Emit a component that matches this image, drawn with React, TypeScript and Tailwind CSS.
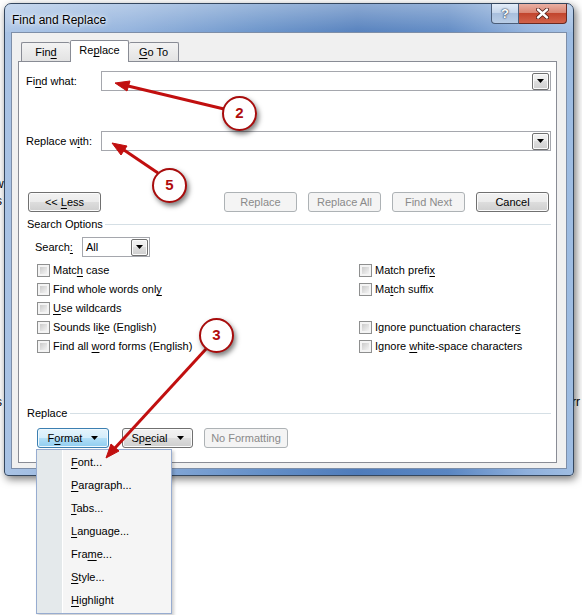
import React from 'react';

type Variant = 'normal' | 'disabled' | 'hot';

const Acc = ({ children }: { children: React.ReactNode }) => (
  <span className="underline underline-offset-[2px]">{children}</span>
);

const Tri = () => (
  <svg width="7" height="4" viewBox="0 0 7 4">
    <path d="M0 0h7L3.5 4z" fill="#000" />
  </svg>
);

const BTN_STYLES: Record<Variant, string> = {
  normal:
    'border-[#707070] bg-[linear-gradient(180deg,#f2f2f2_0%,#ebebeb_50%,#dddddd_50%,#cfcfcf_100%)] shadow-[inset_0_0_0_1px_#fbfbfb] text-black',
  disabled: 'border-[#adb2b5] bg-[#f4f4f4] text-[#8a8a8a]',
  hot:
    'border-[#3c7fb1] bg-[linear-gradient(180deg,#e5f4fc_0%,#d4edfb_50%,#b3dff7_50%,#8fcdf0_100%)] shadow-[inset_0_0_0_1px_#f0f9fe] text-black',
};

const Btn = ({
  children,
  className = '',
  variant = 'normal',
}: {
  children: React.ReactNode;
  className?: string;
  variant?: Variant;
}) => (
  <div
    className={`h-[20px] shrink-0 rounded-[3px] border flex items-center justify-center ${BTN_STYLES[variant]} ${className}`}
  >
    {children}
  </div>
);

const DropBtn = ({ className = '' }: { className?: string }) => (
  <div
    className={`w-[17px] h-[17px] border border-[#707070] rounded-[2px] bg-[linear-gradient(180deg,#f2f2f2_0%,#ebebeb_50%,#dddddd_50%,#cfcfcf_100%)] shadow-[inset_0_0_0_1px_#fbfbfb] flex items-center justify-center ${className}`}
  >
    <Tri />
  </div>
);

const Combo = () => (
  <div className="flex-1 h-[20px] border border-[#a5a7ad] bg-white flex items-center justify-end pr-[1px]">
    <DropBtn />
  </div>
);

const Check = ({ children }: { children: React.ReactNode }) => (
  <div className="h-[19px] flex items-center gap-[3px]">
    <span className="w-[13px] h-[13px] border border-[#8e8f8f] bg-[#f4f4f4] p-[2px]">
      <span className="block w-full h-full bg-[linear-gradient(135deg,#cbcbcb,#f3f3f3)]" />
    </span>
    <span>{children}</span>
  </div>
);

const Section = ({ label, w }: { label: string; w: string }) => (
  <div className="h-[14px] flex items-center">
    <span className={`ml-[1px] ${w}`}>{label}</span>
    <span className="flex-1 h-px bg-[#d5dfe5]" />
  </div>
);

const MENU = [
  ['F', 'ont...'],
  ['P', 'aragraph...'],
  ['T', 'abs...'],
  ['L', 'anguage...'],
  ['Fra', 'm', 'e...'],
  ['S', 'tyle...'],
  ['H', 'ighlight'],
];

const Bubble = ({ n, x, y }: { n: string; x: string; y: string }) => (
  <div
    className={`absolute ${x} ${y} w-[35px] h-[35px] rounded-full border-2 border-[#a80c0c] bg-white shadow-[2px_3px_5px_rgba(0,0,0,0.5)] flex items-center justify-center text-[15px] font-bold text-[#b00d0d]`}
  >
    {n}
  </div>
);

export default function App() {
  return (
    <div className="relative w-[582px] h-[615px] bg-white overflow-hidden font-['Liberation_Sans',Arial,sans-serif] text-[11px] text-black">
      {/* document text peeking out behind the dialog */}
      <span className="absolute left-[-5px] top-[175px] text-[12px]">w</span>
      <span className="absolute left-[-4px] top-[192px] text-[12px]">s</span>
      <span className="absolute left-[-4px] top-[393px] text-[12px]">s</span>
      <span className="absolute left-[572px] top-[393px] text-[12px]">rr</span>

      <div className="pt-[3px] pl-[4px]">
        <div className="relative w-[570px] h-[473px] rounded-t-[7px] rounded-b-[4px] border border-[#34475f] bg-[linear-gradient(90deg,#a9c3e5_0%,#8eafdb_22%,#6590c8_45%,#4f7cbb_62%,#5a86c2_78%,#8fb0dc_92%,#9fbde2_100%)] shadow-[2px_3px_9px_rgba(0,0,0,0.55)] flex flex-col">
          {/* title bar */}
          <div className="h-[28px] flex items-start bg-[linear-gradient(180deg,rgba(255,255,255,0.35),rgba(255,255,255,0.05))] rounded-t-[6px]">
            <span className="pl-[7px] pt-[7px] text-[12px] [text-shadow:0_0_7px_#fff,0_0_3px_#fff]">
              Find and Replace
            </span>
            <div className="ml-auto mr-[6px] flex">
              <div className="w-[28px] h-[20px] border border-[#4b5d78] border-t-0 rounded-bl-[4px] bg-[linear-gradient(180deg,#e4edf8_0%,#c3d4ea_50%,#a9bfdd_50%,#b9cde6_100%)] flex items-center justify-center text-[13px] font-bold text-white [text-shadow:0_0_2px_#1d2c44,0_0_1px_#1d2c44]">
                ?
              </div>
              <div className="w-[48px] h-[20px] border border-[#6a2a22] border-t-0 border-l-0 rounded-br-[4px] bg-[linear-gradient(180deg,#eab0a3_0%,#d8826f_50%,#c2452d_50%,#d2634b_100%)] flex items-center justify-center">
                <svg width="13" height="11" viewBox="0 0 13 11">
                  <path d="M2 1.5l9 8M11 1.5l-9 8" stroke="#4a1a14" strokeWidth="4" strokeLinecap="round" />
                  <path d="M2 1.5l9 8M11 1.5l-9 8" stroke="#fff" strokeWidth="2.4" strokeLinecap="round" />
                </svg>
              </div>
            </div>
          </div>

          {/* client area */}
          <div className="mx-[6px] mb-[6px] flex-1 border border-[#7d8ea8] bg-[#f0f0f0] flex flex-col">
            <div className="h-[28px] pt-[7px] pl-[9px] flex items-end">
              <div className="w-[49px] h-[19px] border border-[#898c95] border-b-0 border-r-0 rounded-t-[2px] bg-[linear-gradient(180deg,#f3f3f3,#e3e3e3)] flex items-center justify-center">
                <span>
                  Fin<Acc>d</Acc>
                </span>
              </div>
              <div className="relative z-10 mb-[-1px] w-[59px] h-[22px] border border-[#898c95] border-b-0 rounded-t-[2px] bg-white flex items-center justify-center pb-[2px]">
                <span>
                  Re<Acc>p</Acc>lace
                </span>
              </div>
              <div className="w-[50px] h-[19px] border border-[#898c95] border-b-0 border-l-0 rounded-t-[2px] bg-[linear-gradient(180deg,#f3f3f3,#e3e3e3)] flex items-center justify-center">
                <span>
                  <Acc>G</Acc>o To
                </span>
              </div>
            </div>

            <div className="ml-[6px] w-[539px] h-[402px] border border-[#898c95] bg-white pt-[9px] pl-[7px] pr-[5px] flex flex-col">
              <div className="h-[20px] flex items-center">
                <span className="w-[75px]">
                  Fi<Acc>n</Acc>d what:
                </span>
                <Combo />
              </div>
              <div className="mt-[40px] h-[20px] flex items-center">
                <span className="w-[75px]">
                  Replace w<Acc>i</Acc>th:
                </span>
                <Combo />
              </div>

              <div className="mt-[41px] flex">
                <Btn className="ml-[2px] w-[73px]">
                  <span>
                    {'<< '}
                    <Acc>L</Acc>ess
                  </span>
                </Btn>
                <Btn className="ml-[123px] w-[73px]" variant="disabled">
                  Replace
                </Btn>
                <Btn className="ml-[11px] w-[73px]" variant="disabled">
                  Replace All
                </Btn>
                <Btn className="ml-[11px] w-[73px]" variant="disabled">
                  Find Next
                </Btn>
                <Btn className="ml-[11px] w-[73px] border-[#3d3d3d]">Cancel</Btn>
              </div>

              <div className="mt-[5px]">
                <Section label="Search Options" w="w-[78px]" />
              </div>

              <div className="mt-[6px] h-[20px] flex items-center">
                <span className="pl-[9px] w-[56px]">
                  Search<Acc>:</Acc>
                </span>
                <div className="w-[68px] h-[20px] border border-[#a5a7ad] bg-white flex items-center pl-[3px] pr-[1px]">
                  <span className="flex-1">All</span>
                  <DropBtn />
                </div>
              </div>

              <div className="mt-[4px] grid grid-cols-[333px_1fr]">
                <div className="pl-[11px] flex flex-col">
                  <Check>
                    Matc<Acc>h</Acc> case
                  </Check>
                  <Check>
                    Find whole words onl<Acc>y</Acc>
                  </Check>
                  <Check>
                    <Acc>U</Acc>se wildcards
                  </Check>
                  <Check>
                    Sounds li<Acc>k</Acc>e (English)
                  </Check>
                  <Check>
                    Find all <Acc>w</Acc>ord forms (English)
                  </Check>
                </div>
                <div className="flex flex-col">
                  <Check>
                    Match prefi<Acc>x</Acc>
                  </Check>
                  <Check>
                    Ma<Acc>t</Acc>ch suffix
                  </Check>
                  <div className="h-[19px]" />
                  <Check>
                    Ignore punctuation character<Acc>s</Acc>
                  </Check>
                  <Check>
                    Ignore <Acc>w</Acc>hite-space characters
                  </Check>
                </div>
              </div>

              <div className="mt-[50px]">
                <Section label="Replace" w="w-[43px]" />
              </div>

              <div className="mt-[8px] flex">
                <Btn className="ml-[11px] w-[72px] gap-[9px]" variant="hot">
                  <span>
                    F<Acc>o</Acc>rmat
                  </span>
                  <Tri />
                </Btn>
                <Btn className="ml-[13px] w-[71px] gap-[9px]">
                  <span>
                    Sp<Acc>e</Acc>cial
                  </span>
                  <Tri />
                </Btn>
                <Btn className="ml-[11px] w-[84px]" variant="disabled">
                  No Formatting
                </Btn>
              </div>
            </div>
          </div>
        </div>
      </div>

      {/* open Format menu */}
      <div className="absolute left-[36px] top-[449px] w-[136px] border border-[#97acd0] bg-[#f5f5f5] shadow-[2px_2px_3px_rgba(0,0,0,0.2)] flex">
        <div className="w-[26px] bg-[#e4e9eb] border-r border-white" />
        <div className="flex-1 pt-[1px] pb-px">
          {MENU.map((m, i) => (
            <div key={i} className="h-[23px] flex items-center pl-[8px]">
              {m.length === 2 ? (
                <span>
                  <Acc>{m[0]}</Acc>
                  {m[1]}
                </span>
              ) : (
                <span>
                  {m[0]}
                  <Acc>{m[1]}</Acc>
                  {m[2]}
                </span>
              )}
            </div>
          ))}
        </div>
      </div>

      {/* annotation arrows */}
      <svg className="absolute left-0 top-0 pointer-events-none" width="582" height="615" viewBox="0 0 582 615">
        <g stroke="#c10f0f" strokeWidth="3" fill="#c10f0f">
          <line x1="224" y1="109" x2="128" y2="86" />
          <polygon points="115,83 130,81 127,91" strokeWidth="1" />
          <line x1="158" y1="173" x2="124" y2="150" />
          <polygon points="112,143 127,146 121,155" strokeWidth="1" />
          <line x1="206" y1="349" x2="115" y2="448" />
          <polygon points="106,458 119,451 111,444" strokeWidth="1" />
        </g>
      </svg>

      <Bubble n="2" x="left-[222px]" y="top-[96px]" />
      <Bubble n="5" x="left-[152px]" y="top-[168px]" />
      <Bubble n="3" x="left-[199px]" y="top-[318px]" />
    </div>
  );
}
